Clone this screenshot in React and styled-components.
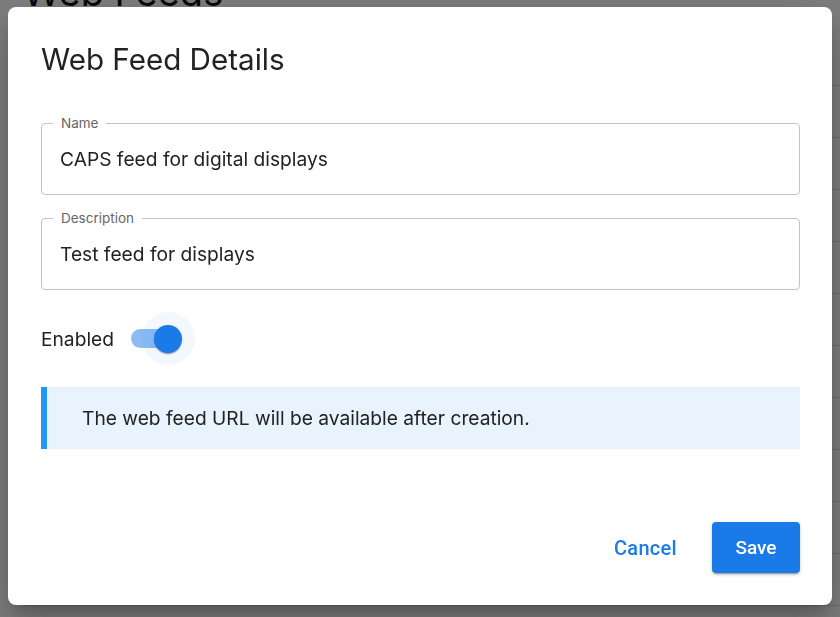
import React, { useState } from "react";
import styled, { createGlobalStyle } from "styled-components";

const GlobalStyle = createGlobalStyle`
  html, body {
    margin: 0;
    padding: 0;
    background: #fff;
    font-family: "Inter", "Roboto", sans-serif;
  }
  * { box-sizing: border-box; }
`;

const rows = Array.from({ length: 11 });

const App = () => {
  const [enabled, setEnabled] = useState(true);

  return (
    <>
      <GlobalStyle />
      <Page>
        <PageTitle>Web Feeds</PageTitle>
        <Table>
          {rows.map((_, i) => (
            <Row key={i} />
          ))}
        </Table>
      </Page>

      <Backdrop>
        <Dialog>
          <Title>Web Feed Details</Title>

          <Body>
            <Field>
              <Label>Name</Label>
              <Input defaultValue="CAPS feed for digital displays" />
            </Field>
            <Field>
              <Label>Description</Label>
              <Input defaultValue="Test feed for displays" />
            </Field>

            <SwitchRow>
              <span>Enabled</span>
              <SwitchBase onClick={() => setEnabled(!enabled)}>
                <Track $on={enabled} />
                <Halo $on={enabled}>
                  <Thumb $on={enabled} />
                </Halo>
              </SwitchBase>
            </SwitchRow>

            <Alert>The web feed URL will be available after creation.</Alert>
          </Body>

          <Actions>
            <TextButton>Cancel</TextButton>
            <PrimaryButton>Save</PrimaryButton>
          </Actions>
        </Dialog>
      </Backdrop>
    </>
  );
};

const Page = styled.div`
  height: 617px;
  overflow: hidden;
  padding: 0 0 0 23px;
`;

const PageTitle = styled.h1`
  margin: -30px 0 0;
  font-family: "Inter", sans-serif;
  font-weight: 400;
  font-size: 38px;
  line-height: 1.2;
  color: #111;
`;

const Table = styled.div`
  margin-top: 18px;
  display: flex;
  flex-direction: column;
`;

const Row = styled.div`
  height: 52px;
  border-bottom: 1px solid #dcdcdc;
`;

const Backdrop = styled.div`
  position: fixed;
  inset: 0;
  background: rgba(0, 0, 0, 0.5);
  display: flex;
  align-items: flex-start;
  justify-content: center;
`;

const Dialog = styled.div`
  margin: 7px 8px 12px;
  width: 824px;
  height: 598px;
  background: #fff;
  border-radius: 8px;
  padding: 35px 32px 32px 33px;
  display: flex;
  flex-direction: column;
  box-shadow: 0px 11px 15px -7px rgba(0, 0, 0, 0.2),
    0px 24px 38px 3px rgba(0, 0, 0, 0.14),
    0px 9px 46px 8px rgba(0, 0, 0, 0.12);
`;

const Title = styled.h2`
  margin: 0;
  font-size: 29.6px;
  font-weight: 400;
  line-height: 34px;
  color: #222;
`;

const Body = styled.div`
  margin-top: 47px;
  display: flex;
  flex-direction: column;
  gap: 23px;
`;

const Field = styled.div`
  position: relative;
  height: 72px;
  border: 1px solid #c4c4c4;
  border-radius: 4px;
  display: flex;
  align-items: center;
  padding: 0 18px;
`;

const Label = styled.label`
  position: absolute;
  top: -9px;
  left: 11px;
  padding: 0 8px;
  background: #fff;
  font-size: 13.5px;
  line-height: 16px;
  color: #666;
`;

const Input = styled.input`
  border: none;
  outline: none;
  width: 100%;
  padding: 0;
  font-family: inherit;
  font-size: 19.2px;
  color: #222;
  background: transparent;
`;

const SwitchRow = styled.div`
  display: flex;
  align-items: center;
  height: 51px;
  font-size: 19.2px;
  color: #222;
  gap: 17px;
`;

const SwitchBase = styled.div`
  position: relative;
  width: 62px;
  height: 51px;
  display: flex;
  align-items: center;
  cursor: pointer;
`;

const Track = styled.div`
  width: 46px;
  height: 19px;
  border-radius: 10px;
  background: ${(p) => (p.$on ? "#8cbbf4" : "#bdbdbd")};
`;

const Halo = styled.div`
  position: absolute;
  top: -1px;
  left: ${(p) => (p.$on ? "11px" : "-16px")};
  width: 53px;
  height: 53px;
  border-radius: 50%;
  background: rgba(26, 123, 232, 0.05);
  display: flex;
  align-items: center;
  justify-content: center;
`;

const Thumb = styled.div`
  width: 28px;
  height: 28px;
  border-radius: 50%;
  background: ${(p) => (p.$on ? "#1a7be8" : "#fafafa")};
  box-shadow: 0px 2px 1px -1px rgba(0, 0, 0, 0.2),
    0px 1px 1px 0px rgba(0, 0, 0, 0.14), 0px 1px 3px 0px rgba(0, 0, 0, 0.12);
`;

const Alert = styled.div`
  height: 62px;
  display: flex;
  align-items: center;
  padding-left: 35px;
  background: #e9f3fd;
  border-left: 6px solid #2196f3;
  font-size: 19.2px;
  color: #222;
`;

const Actions = styled.div`
  margin-top: auto;
  display: flex;
  justify-content: flex-end;
  align-items: center;
  gap: 19px;
`;

const TextButton = styled.button`
  border: none;
  background: none;
  height: 51px;
  padding: 0 16px;
  font-family: "Roboto", sans-serif;
  font-size: 20px;
  font-weight: 500;
  letter-spacing: 0.3px;
  color: #1a7be8;
  cursor: pointer;
`;

const PrimaryButton = styled.button`
  border: none;
  width: 88px;
  height: 51px;
  border-radius: 4px;
  background: #1a7be8;
  color: #fff;
  font-family: "Roboto", sans-serif;
  font-size: 19px;
  font-weight: 500;
  cursor: pointer;
  box-shadow: 0px 3px 1px -2px rgba(0, 0, 0, 0.2),
    0px 2px 2px 0px rgba(0, 0, 0, 0.14), 0px 1px 5px 0px rgba(0, 0, 0, 0.12);
`;

export default App;
